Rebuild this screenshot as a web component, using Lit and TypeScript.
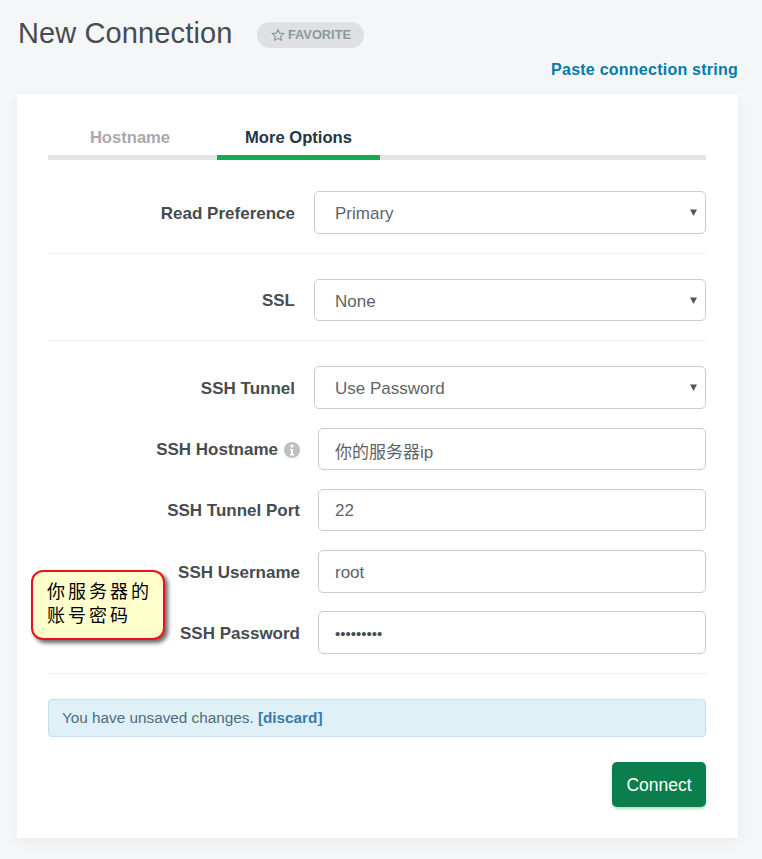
import { LitElement, html, css } from "lit";
import { customElement } from "lit/decorators.js";

@customElement("app-root")
export class AppRoot extends LitElement {
  static styles = css`
    :host { display: block; min-height: 859px; background: #f5f6f7; font-family: "Liberation Sans", "Noto Sans CJK SC", sans-serif; position: relative; overflow: hidden; }
    .page { padding: 0 24px 21px 17px; display: flex; flex-direction: column; }
    .head { display: flex; align-items: center; height: 48px; padding: 9px 0 0 1px; box-sizing: content-box; }
    h1 { margin: 0; font-weight: 400; font-size: 29px; line-height: 48px; color: #464c4f; letter-spacing: 0.12px; }
    .fav { margin-left: 25px; height: 26px; width: 107px; border-radius: 13px; background: #dee0e3; color: #8a9a9a; display: flex; align-items: center; justify-content: center; gap: 3px; font-size: 12.8px; font-weight: 700; box-sizing: border-box; margin-top: 3px; }
    .fav svg { width: 14px; height: 14px; }
    .paste { align-self: flex-end; color: #007cad; font-weight: 700; font-size: 16px; line-height: 20px; height: 20px; margin-top: 3px; margin-bottom: 14px; letter-spacing: 0.24px; }
    .card { background: #fff; box-shadow: 0 4px 12px rgba(0, 0, 0, 0.05); padding: 27px 32px 31px 31px; height: 744px; box-sizing: border-box; }
    .tabs { display: flex; align-items: flex-start; height: 34px; border-bottom: 5px solid #e3e3e3; box-sizing: content-box; }
    .tab { font-weight: 700; font-size: 16.6px; line-height: 34px; text-align: center; color: #a9a9a9; border-bottom: 5px solid transparent; height: 34px; flex: none; }
    .tab.h { width: 164px; margin-right: 5px; }
    .tab.m { width: 163px; color: #243642; border-bottom-color: #13aa52; }
    .row { display: flex; align-items: center; }
    .label { width: 247px; flex: none; text-align: right; font-weight: 700; font-size: 17px; color: #464c4f; white-space: nowrap; display: flex; justify-content: flex-end; align-items: center; gap: 6px; padding-top: 2px; box-sizing: border-box; }
    .row.in .label { width: 252px; }
    .sel { margin-left: 19px; flex: 1; position: relative; }
    .sel select, .row input { display: block; width: 100%; box-sizing: border-box; height: 43px; border: 1px solid #ccc; border-radius: 5px; background: #fff; color: #5e6468; font: 17px "Liberation Sans", "Noto Sans CJK SC", sans-serif; padding: 2px 20px 0; appearance: none; -webkit-appearance: none; outline: none; }
    .sel svg { position: absolute; right: 9px; top: 18px; width: 7px; height: 7px; }
    .row input { margin-left: 18px; flex: 1; width: auto; min-width: 0; padding: 2px 16px 0; }
    .row input.pw { color: #464c4f; font-size: 15px; }
    .row.short select, .row.short input { height: 42px; }
    hr { border: 0; border-top: 1px solid #eee; margin: 0; }
    .alert { margin-top: 25px; height: 38px; box-sizing: border-box; background: #dff0f6; border: 1px solid #c1e1f1; border-radius: 4px; color: #4d6c80; font-size: 15.3px; line-height: 36px; padding-left: 13px; }
    .alert a { color: #3a7bae; font-weight: 700; }
    .foot { display: flex; justify-content: flex-end; margin-top: 25px; }
    .btn { width: 94px; height: 45px; border-radius: 5px; background: #0c7e4d; color: #fff; border: 0; font: 17.5px "Liberation Sans", sans-serif; box-shadow: 0 2px 3px rgba(19, 170, 82, 0.35); padding: 2px 0 0; }
    .note { position: absolute; left: 31px; top: 570px; width: 134px; height: 70px; box-sizing: border-box; background: #ffffcc; border: 2px solid #f0101a; border-radius: 12px; box-shadow: 3px 3px 4px rgba(0, 0, 0, 0.6); color: #000; font-family: "Noto Sans CJK SC", sans-serif; font-size: 18px; line-height: 24px; letter-spacing: 3px; padding: 6px 0 0 14px; }
    .info { width: 16px; height: 16px; flex: none; }
    .gap-31 { margin-top: 31px; }
    .gap-25 { margin-top: 25px; }
    .gap-19 { margin-top: 19px; }
    .gap-18 { margin-top: 18px; }
  `;

  private select(value: string) {
    return html`<div class="sel">
      <select><option>${value}</option></select>
      <svg viewBox="0 0 7 7"><path d="M0 0.5h7L3.5 7z" fill="#555" /></svg>
    </div>`;
  }

  render() {
    return html`
      <div class="page">
        <div class="head">
          <h1>New Connection</h1>
          <div class="fav">
            <svg viewBox="0 0 24 24" fill="none" stroke="#8a9a9a" stroke-width="2"><path d="M12 2.8l2.9 6 6.6.9-4.8 4.6 1.2 6.6-5.9-3.2-5.9 3.2 1.2-6.6L2.5 9.7l6.6-.9z" /></svg>
            <span>FAVORITE</span>
          </div>
        </div>
        <div class="paste">Paste connection string</div>
        <div class="card">
          <div class="tabs">
            <div class="tab h">Hostname</div>
            <div class="tab m">More Options</div>
          </div>
          <div class="row gap-31"><div class="label">Read Preference</div>${this.select("Primary")}</div>
          <hr class="gap-19" />
          <div class="row short gap-25"><div class="label">SSL</div>${this.select("None")}</div>
          <hr class="gap-19" />
          <div class="row gap-25"><div class="label">SSH Tunnel</div>${this.select("Use Password")}</div>
          <div class="row in short gap-19"><div class="label">SSH Hostname
            <svg class="info" viewBox="0 0 16 16"><circle cx="8" cy="8" r="8" fill="#bfbfbf" /><circle cx="8" cy="4" r="1.6" fill="#fff" /><path d="M6 7h3v5h1v1.5H6V12h1V8.5H6z" fill="#fff" /></svg>
          </div><input value="你的服务器ip" /></div>
          <div class="row in short gap-19"><div class="label">SSH Tunnel Port</div><input value="22" /></div>
          <div class="row in gap-19"><div class="label">SSH Username</div><input value="root" /></div>
          <div class="row in gap-18"><div class="label">SSH Password</div><input class="pw" type="password" value="123456789" /></div>
          <hr class="gap-19" />
          <div class="alert">You have unsaved changes. <a>[discard]</a></div>
          <div class="foot"><button class="btn">Connect</button></div>
        </div>
      </div>
      <div class="note">你服务器的<br />账号密码</div>
    `;
  }
}
